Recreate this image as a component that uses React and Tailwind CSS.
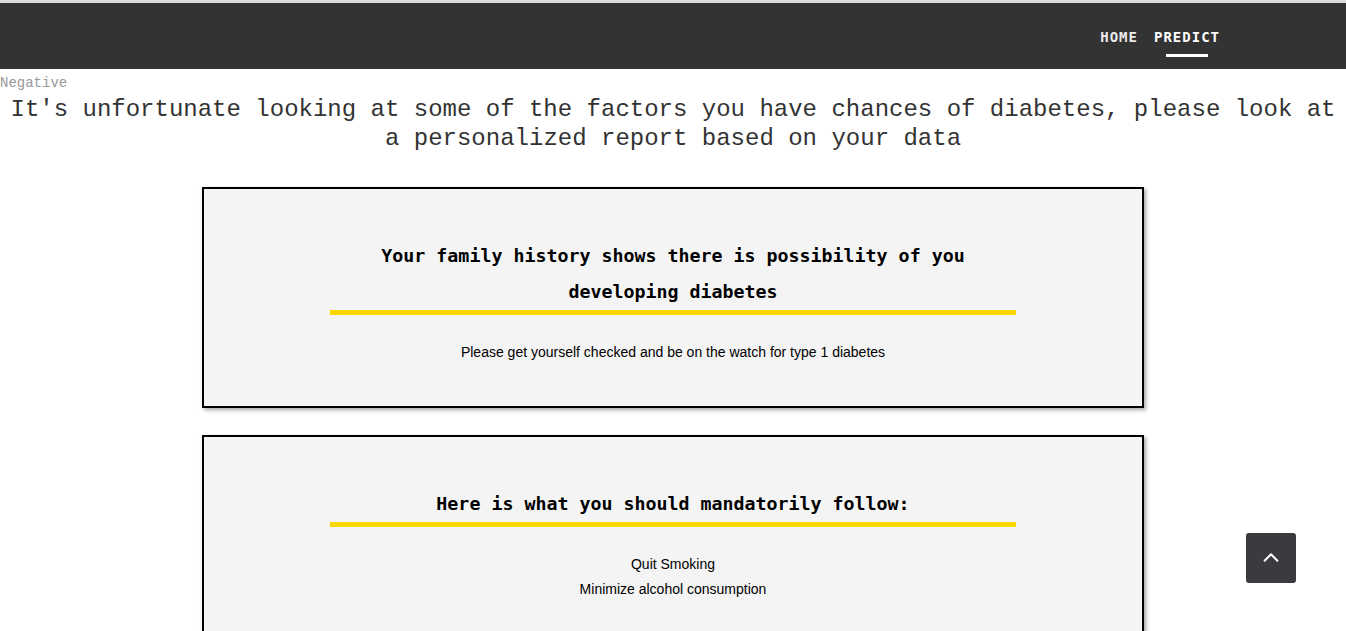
import React from "react";

function Card({ title, children }) {
  return (
    <div className="border-2 border-black bg-[#f4f4f4] shadow-[2px_2px_4px_rgba(0,0,0,0.35)] pt-[49px] pb-[41px]">
      <h2 className="mx-auto w-[686px] border-b-[5px] border-[#fad700] text-center text-[18.3px] leading-[36px] font-bold text-black font-['DejaVu_Sans_Mono',monospace]">
        {title}
      </h2>
      <div className="mt-[25px] text-center text-[14px] leading-[25px] text-black font-['Liberation_Sans',Arial,sans-serif]">
        {children}
      </div>
    </div>
  );
}

export default function App() {
  return (
    <div className="min-h-[631px] bg-white">
      <div className="h-[3px] bg-[#dcdcdc]" />
      <header className="h-[66px] bg-[#333333] flex items-center justify-end pr-[126px] pt-[2px]">
        <nav className="flex items-center gap-[16px] font-['DejaVu_Sans_Mono',monospace] text-[14px] tracking-[1px]">
          <a className="text-[#ececec] font-semibold">HOME</a>
          <a className="relative text-white font-bold">
            PREDICT
            <span className="absolute left-[12px] top-[27px] h-[3px] w-[42px] bg-white" />
          </a>
        </nav>
      </header>
      <p className="mt-[4px] text-[14px] leading-[20px] text-[#999999] font-['Liberation_Mono',monospace]">
        Negative
      </p>
      <h1 className="mt-[2px] text-center text-[24px] leading-[29px] text-[#333333] font-['Liberation_Mono',monospace]">
        It's unfortunate looking at some of the factors you have chances of diabetes, please look at a personalized report based on your data
      </h1>
      <div className="mx-auto mt-[34px] w-[942px] flex flex-col gap-[27px] pb-10">
        <Card title="Your family history shows there is possibility of you developing diabetes">
          <p>Please get yourself checked and be on the watch for type 1 diabetes</p>
        </Card>
        <Card title="Here is what you should mandatorily follow:">
          <p>Quit Smoking</p>
          <p>Minimize alcohol consumption</p>
        </Card>
      </div>
      <button className="fixed right-[50px] bottom-[48px] h-[50px] w-[50px] rounded-[3px] bg-[#3a3b3f] flex items-center justify-center">
        <svg width="22" height="22" viewBox="0 0 24 24" fill="none" stroke="white" strokeWidth="2.2" strokeLinecap="round" strokeLinejoin="round">
          <path d="M5 15l7-7 7 7" />
        </svg>
      </button>
    </div>
  );
}
